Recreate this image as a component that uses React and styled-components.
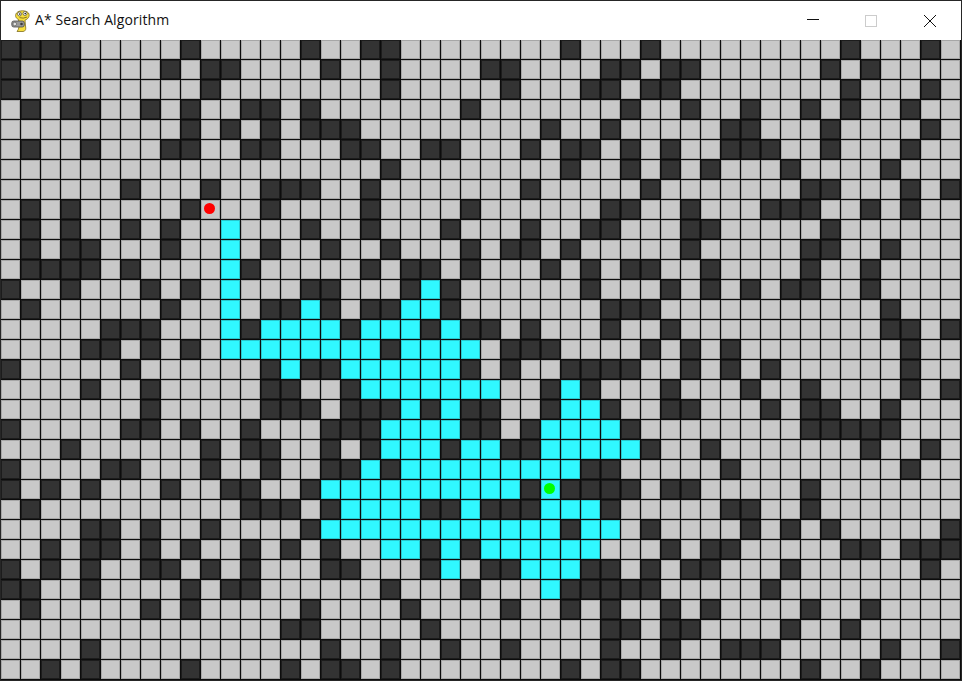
import React from 'react';
import styled, { createGlobalStyle } from 'styled-components';

// # wall, . open, c visited, S start, G goal
const rows = [
  '####.....#.....# ..##........#... #.........#...#.',
  '#..#....#.##.... #..#....##....## .##......#.#....',
  '#.........#..... ...#.....#...##. ##........#...#.',
  '.#.##..#.#..##.# .......#.......# ..#..#..#.#..#..',
  '.........#.#.#.# ##.........#..#. ....##...#....#.',
  '.#..#...##..##.. .##..##...#.##.# .#..###..#...#..',
  '................ ...#........#..# .#.#...#....#...',
  '......#...#..### ..#.......#..... #.......##...#.#',
  '.#.#.....#S..#.. ..#....#......## ..#...###..#.#..',
  '.#.#..#.#..c...# ..#...#...#..##. ..##.....#......',
  '.#.##...#..c.#.. #..#...#.##.#... ..#.....##..#...',
  '.####.#....c#... ..#.##.#...#.#.# #..#....#..#....',
  '#..#...#.#.c...# #...#c#......#.. .#.#.#.##..#....',
  '.#......#..c.##c #.##cc#.......## #...........#...',
  '.....###...c#ccc c#ccc#c##.#...#. .#..........##.#',
  '....##.#.#.ccccc ccc#cccc.###.... #.#.#........#..',
  '#.....#......#c# #cccccc#.#..#### ..#.#.#......#..',
  '....#..#.....##. .#ccccccc..#c#.. .#...#..#....#.#',
  '.......#.....### .###c#c##..#cc#. .##...#.##..#...',
  '#.....##.#..#... ###cccc##.#cccc# ........#####...',
  '...#......#.##.. #.#ccc#cc##ccccc #..#.......#..#.',
  '#....##...#..#.. ##c#ccccccccc##. ....#........#..',
  '#.#.#...#..##..# cccccccccc#G#### .##.....#.......',
  '.#..........###. #cccc##c###ccc#. ....##..#.......',
  '....##.#..#....# cccccccccccc#cc. #....#.#.#.....#',
  '..#.##.#.#..#.#. #..cc#c#cccccc.. .#.##.....##.###',
  '#.#.#..##.#.#... ##...#c.##ccc##. #.##...#......#.',
  '##..#....#.##... ...#...#...c#### #.....#.........',
  '.#.....#.#.....# ....#....#..#.#. .#.#....#..#....',
  '..............## .....#........## .##....#..#.....',
  '....#........... #..#..#..#....#. .#..###.....#..#',
  '..#.#....#....#. ##.#........#.## ........#..#....',
].map((row) => row.replace(/ /g, ''));

const GlobalStyle = createGlobalStyle`
  html, body {
    margin: 0;
    padding: 0;
    background: #fff;
    overflow: hidden;
  }
`;

const Window = styled.div`
  width: 960px;
  height: 679px;
  border: 1px solid #262626;
  display: flex;
  flex-direction: column;
  background: #fff;
`;

const TitleBar = styled.div`
  height: 39px;
  display: flex;
  align-items: center;
  padding: 0 2px 0 10px;
  background: #fff;
`;

const AppIcon = styled.svg`
  width: 19px;
  height: 22px;
  margin-right: 5px;
  flex: none;
`;

const Title = styled.div`
  flex: 1;
  margin-bottom: 2px;
  font-family: 'Open Sans', 'Noto Sans', sans-serif;
  font-size: 14px;
  letter-spacing: 0.1px;
  color: #111;
  white-space: nowrap;
`;

const CaptionButton = styled.div`
  width: 58px;
  height: 39px;
  display: flex;
  align-items: center;
  justify-content: center;
  flex: none;

  &:last-child {
    width: 59px;
  }
`;

const CaptionIcon = styled.svg`
  width: 14px;
  height: 14px;
`;

const Board = styled.div`
  flex: 1;
  display: grid;
  grid-template-columns: repeat(48, 19px);
  grid-template-rows: repeat(32, 19px);
  gap: 1px;
  padding: 0 1px 1px 0;
  background: #0c0c0c;
`;

const cellColors = {
  '#': ['#333333', '#1c1c1c'],
  '.': ['#c8c8c8', '#a6a6a6'],
  c: ['#30f8ff', '#28c8ce'],
  S: ['#c8c8c8', '#a6a6a6'],
  G: ['#30f8ff', '#28c8ce'],
};

const Cell = styled.div`
  display: flex;
  align-items: center;
  justify-content: center;
  background: ${(p) => cellColors[p.$kind][0]};
  box-shadow: inset 0 0 0 1px ${(p) => cellColors[p.$kind][1]};
`;

const Marker = styled.div`
  width: 11px;
  height: 11px;
  margin: 0 2px 2px 0;
  border-radius: 50%;
  background: ${(p) => p.$color};
`;

const PygameIcon = () => (
  <AppIcon viewBox="0 0 19 22">
    <path d="M5.5 3 C8 0 15 0 17.5 3 C19.5 6.5 16.5 9.5 14 10 L14.5 16 C15 19 15 21 12 21.5 L6 21.5 C8 19 8 17 8 14 L7.5 9.5 C4.5 8 3.8 5.5 5.5 3 Z" fill="#f7df3d" stroke="#7d6c1e" strokeWidth="0.8" />
    <circle cx="8.5" cy="4" r="2" fill="#fff" stroke="#333" strokeWidth="0.6" />
    <circle cx="14" cy="3.5" r="2" fill="#fff" stroke="#333" strokeWidth="0.6" />
    <circle cx="8.8" cy="4.1" r="0.8" fill="#111" />
    <circle cx="14.2" cy="3.6" r="0.8" fill="#111" />
    <path d="M8.5 7.6 Q12 9 16.2 7" fill="none" stroke="#6d5d18" strokeWidth="0.8" />
    <rect x="0.8" y="11" width="12.5" height="6" rx="2" fill="#9a9a9a" stroke="#4a4a4a" strokeWidth="0.8" />
    <circle cx="3.8" cy="14" r="1.8" fill="#e2e2e2" stroke="#444" strokeWidth="0.5" />
    <circle cx="10.5" cy="14" r="1.3" fill="#3c3c3c" />
  </AppIcon>
);

const App = () => (
  <>
    <GlobalStyle />
    <Window>
      <TitleBar>
        <PygameIcon />
        <Title>A* Search Algorithm</Title>
        <CaptionButton>
          <CaptionIcon viewBox="0 0 14 14">
            <path d="M1 5.5 H13" stroke="#111" strokeWidth="1" />
          </CaptionIcon>
        </CaptionButton>
        <CaptionButton>
          <CaptionIcon viewBox="0 0 14 14">
            <rect x="1.5" y="1.5" width="11" height="11" fill="none" stroke="#cccccc" strokeWidth="1" />
          </CaptionIcon>
        </CaptionButton>
        <CaptionButton>
          <CaptionIcon viewBox="0 0 14 14">
            <path d="M1 1 L13 13 M13 1 L1 13" stroke="#111" strokeWidth="1" />
          </CaptionIcon>
        </CaptionButton>
      </TitleBar>
      <Board>
        {rows.map((row, y) =>
          row.split('').map((kind, x) => (
            <Cell key={`${x}-${y}`} $kind={kind}>
              {kind === 'S' && <Marker $color="#ff0000" />}
              {kind === 'G' && <Marker $color="#00ff00" />}
            </Cell>
          ))
        )}
      </Board>
    </Window>
  </>
);

export default App;
